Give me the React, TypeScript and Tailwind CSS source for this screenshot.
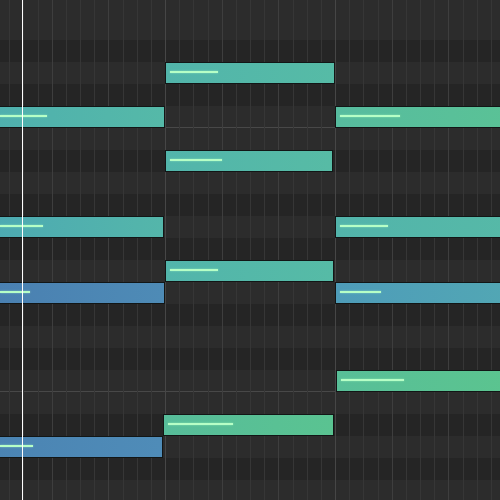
import React from "react";

// piano roll: 3/4, sixteenth grid, 170px per bar
const ROW_H = 22;
const TOP = -4;
const BAR = 170;
const GRID_X0 = -5;

// key of each visible row, top to bottom
const KEYS = ["F", "E", "D#", "D", "C#", "C", "B", "A#", "A", "G#", "G", "F#", "F", "E", "D#", "D", "C#", "C", "B", "A#", "A", "G#", "G"];

type Note = { row: number; x: number; end: number; vel: number; from: string; to: string };

const NOTES: Note[] = [
  { row: 3, x: 165, end: 334, vel: 48, from: "#52b5ab", to: "#56bba6" },
  { row: 5, x: -5, end: 164, vel: 47, from: "#4fb0ae", to: "#55b9a8" },
  { row: 5, x: 335, end: 510, vel: 60, from: "#57bc9f", to: "#5ac296" },
  { row: 7, x: 165, end: 332, vel: 52, from: "#52b5ab", to: "#57bba5" },
  { row: 10, x: -5, end: 163, vel: 43, from: "#4daab2", to: "#54b6aa" },
  { row: 10, x: 335, end: 510, vel: 48, from: "#52b4ab", to: "#56b9a7" },
  { row: 12, x: 165, end: 333, vel: 48, from: "#52b5ab", to: "#56bba6" },
  { row: 13, x: -5, end: 164, vel: 30, from: "#4a80b1", to: "#4e8bb6" },
  { row: 13, x: 335, end: 510, vel: 41, from: "#4e9cb9", to: "#52a7b4" },
  { row: 17, x: 336, end: 510, vel: 63, from: "#58bf98", to: "#5bc48f" },
  { row: 19, x: 163, end: 333, vel: 65, from: "#57bd9a", to: "#5ac391" },
  { row: 20, x: -5, end: 162, vel: 33, from: "#4b84b3", to: "#4f8cb8" },
];

function GridLines() {
  const lines = [];
  for (let i = 0; i <= 36; i++) {
    const left = Math.round(GRID_X0 + (i * BAR) / 12);
    const kind = i % 12 === 0 ? "bar" : i % 4 === 0 ? "beat" : "step";
    lines.push(
      <div
        key={i}
        className={
          "absolute top-0 h-full w-px " +
          (kind === "bar" ? "bg-[#464646]" : kind === "beat" ? "bg-[#3e3e3e]" : "bg-[#363636]")
        }
        style={{ left }}
      />
    );
  }
  return <div className="absolute inset-0">{lines}</div>;
}

function NoteBlock({ n }: { n: Note }) {
  return (
    <div
      className="absolute border border-[#121616] overflow-hidden"
      style={{
        top: TOP + n.row * ROW_H,
        left: n.x,
        width: n.end - n.x + 1,
        height: ROW_H,
        background: `linear-gradient(to right, ${n.from}, ${n.to})`,
      }}
    >
      <div
        className="absolute top-[8px] left-[4px] h-[2px] bg-[#b6ffc6] shadow-[0_0_2px_rgba(182,255,198,0.6)]"
        style={{ width: n.vel }}
      />
    </div>
  );
}

export default function App() {
  return (
    <div className="relative w-[500px] h-[500px] overflow-hidden bg-[#2c2c2c]">
      <div className="flex flex-col mt-[-4px]">
        {KEYS.map((k, i) => (
          <div
            key={i}
            className={
              "h-[22px] shrink-0 " +
              (k.includes("#") ? "bg-[#252525]" : "bg-[#2c2c2c]") +
              (k === "C" ? " border-b border-[#484848]" : "")
            }
          />
        ))}
      </div>
      <GridLines />
      {NOTES.map((n, i) => (
        <NoteBlock key={i} n={n} />
      ))}
      <div className="absolute top-0 left-[22px] w-px h-full bg-white" />
    </div>
  );
}
